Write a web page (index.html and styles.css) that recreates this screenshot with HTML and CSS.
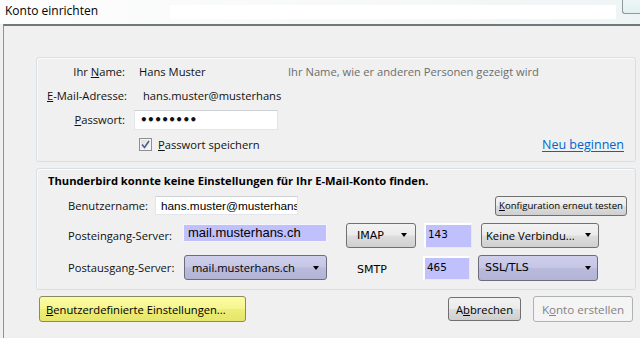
FILE: index.html
```html
<!DOCTYPE html>
<html lang="de">
<head>
    <meta charset="UTF-8">
    <title>Konto einrichten</title>
    <link rel="stylesheet" href="styles.css">
</head>
<body>

<div class="titlebar">
    <span class="title">Konto einrichten</span>
    <span class="titlefield"></span>
    <span class="caption"></span>
</div>

<div class="dialog">
    <!-- Identity -->
    <div class="group identity">
        <span class="lbl">Ihr <u>N</u>ame:</span>
        <span class="val name">Hans Muster</span>
        <span class="hint">Ihr Name, wie er anderen Personen gezeigt wird</span>

        <span class="lbl email-lbl"><u>E</u>-Mail-Adresse:</span>
        <span class="val email">hans.muster@musterhans</span>
        <span></span>

        <span class="lbl"><u>P</u>asswort:</span>
        <span class="textbox password">&bull;&bull;&bull;&bull;&bull;&bull;&bull;&bull;</span>
        <span></span>

        <span></span>
        <span class="val check">
            <span class="checkbox">
                <svg width="9" height="9" viewBox="0 0 9 9"><path d="M1 4.5 L3.5 7.5 L8 1" fill="none" stroke="#4a5d8c" stroke-width="1.6"/></svg>
            </span>
            <span><u>P</u>asswort speichern</span>
        </span>
        <a class="link" href="#">Neu beginnen</a>
    </div>

    <!-- Server settings -->
    <div class="group servers">
        <div class="notice">Thunderbird konnte keine Einstellungen für Ihr E-Mail-Konto finden.</div>

        <div class="row row-user">
            <span class="rlabel user-lbl">Benutzername:</span>
            <span class="textbox username">hans.muster@musterhans</span>
            <button class="btn retest"><u>K</u>onfiguration erneut testen</button>
        </div>

        <div class="row row-in">
            <span class="rlabel in-lbl">Posteingang-Server:</span>
            <span class="textbox host">mail.musterhans.ch</span>
            <span class="menu proto">IMAP<i class="arrow"></i></span>
            <span class="textbox port">143</span>
            <span class="menu sec">Keine Verbindu...<i class="arrow"></i></span>
        </div>

        <div class="row row-out">
            <span class="rlabel out-lbl">Postausgang-Server:</span>
            <span class="menu filled hostmenu">mail.musterhans.ch<i class="arrow"></i></span>
            <span class="smtp">SMTP</span>
            <span class="textbox port port-out">465</span>
            <span class="menu filled sec sec-out">SSL/TLS<i class="arrow"></i></span>
        </div>
    </div>

    <div class="actions">
        <button class="btn custom"><u>B</u>enutzerdefinierte Einstellungen...</button>
        <button class="btn cancel">A<u>b</u>brechen</button>
        <button class="btn create" disabled>K<u>o</u>nto erstellen</button>
    </div>
</div>

</body>
</html>
```

FILE: styles.css
```css
body {
    margin: 0;
    width: 640px;
    height: 338px;
    overflow: hidden;
    background-color: #f0f0f0;
    font-family: "Open Sans", "Liberation Sans", sans-serif;
    font-size: 11.2px;
    color: #111;
}

u {
    text-decoration: underline;
    text-underline-offset: 1px;
}

/* Title bar */
.titlebar {
    height: 24px;
    display: flex;
    align-items: flex-start;
    background: linear-gradient(to right, #fdfdfd, #f6f7f7 70%, #eef4f4);
}

.title {
    width: 165px;
    padding: 2px 0 0 5px;
    font-size: 12px;
    color: #000;
}

.titlefield {
    width: 446px;
    height: 14px;
    margin-top: 5px;
    background-color: #fff;
}

.caption {
    margin-left: auto;
    width: 17px;
    height: 13px;
    background: linear-gradient(#eef7f8, #e2eff1);
    border-left: 1px solid #8c9a9a;
    border-bottom: 1px solid #8c9a9a;
    border-bottom-left-radius: 3px;
}

/* Dialog body */
.dialog {
    margin-left: 3px;
    height: 312px;
    border-top: 2px solid #6f7b7b;
    border-left: 1px solid #8a9494;
}

.group {
    margin: 0 4px 0 32px;
    border: 1px solid #d5dfe5;
    border-radius: 3px;
    box-shadow: inset 1px 1px 0 #fafcfd;
}

/* Identity group */
.identity {
    margin-top: 31px;
    padding: 1px 0 4px;
    display: grid;
    grid-template-columns: 90px 147px 1fr;
    grid-template-rows: 24px 25px 23px 26px;
    column-gap: 7px;
    align-items: center;
}

.lbl {
    text-align: right;
    padding-right: 2px;
}

.email-lbl {
    padding-right: 0;
}

.val.name {
    padding-left: 5px;
}

.val.email {
    padding-left: 9px;
}

.hint {
    color: #6d6d6d;
}

.textbox {
    box-sizing: border-box;
    display: flex;
    align-items: center;
    overflow: hidden;
    white-space: nowrap;
    background-color: #fff;
    border: 1px solid #e2e6ea;
    border-top-color: #cdd1d6;
}

.password {
    width: 144px;
    height: 20px;
    padding-left: 5px;
    font-family: "DejaVu Sans", sans-serif;
    font-size: 12px;
    font-weight: bold;
    letter-spacing: -0.6px;
}

.check {
    display: flex;
    align-items: center;
    gap: 6px;
    padding-left: 5px;
    white-space: nowrap;
}

.checkbox {
    box-sizing: border-box;
    width: 13px;
    height: 13px;
    display: flex;
    align-items: center;
    justify-content: center;
    border: 1px solid #8e8f8f;
    background: linear-gradient(135deg, #dcdcdc, #fbfbfb);
    box-shadow: inset 0 0 0 1px #f4f4f4;
}

.link {
    justify-self: end;
    margin-right: 11px;
    color: #0066cc;
    font-size: 12.5px;
    text-underline-offset: 2px;
}

/* Server group */
.servers {
    margin-top: 6px;
    padding: 1px 0 5px;
}

.notice {
    height: 22px;
    line-height: 22px;
    padding-left: 11px;
    font-weight: bold;
    color: #000;
}

.row {
    display: flex;
    align-items: center;
    padding-left: 31px;
}

.row-user { height: 27px; }
.row-in { height: 32px; }
.row-out { height: 33px; }

.user-lbl { width: 87px; }
.in-lbl { width: 115px; }
.out-lbl { width: 116px; }

.username {
    width: 143px;
    height: 19px;
    padding-left: 5px;
    font-family: "Liberation Sans", sans-serif;
    font-size: 11.8px;
    color: #000;
}

.host {
    width: 144px;
    height: 18px;
    margin-bottom: 5px;
    padding-left: 4px;
    background-color: #c0c0fc;
    border: 1px solid #f4f4fc;
    font-family: "Liberation Sans", sans-serif;
    font-size: 13px;
    color: #000;
}

.port {
    width: 48px;
    height: 25px;
    margin-left: 8px;
    padding: 0 0 3px 2px;
    background-color: #c0c0fc;
    border: 1px solid #e8e8f2;
    border-top: 2px solid #fff;
    border-left: 2px solid #fff;
    font-family: "DejaVu Sans", sans-serif;
    font-size: 10.4px;
    color: #000;
}

.port-out {
    width: 47px;
    height: 24px;
    margin-left: 7px;
}

/* Buttons and menus */
.btn,
.menu {
    box-sizing: border-box;
    border: 1px solid #707070;
    border-radius: 3px;
    background: linear-gradient(#f2f2f2 0%, #ebebeb 48%, #dddddd 52%, #cfcfcf 100%);
    color: #000;
    font-family: inherit;
    font-size: inherit;
    padding: 0;
}

.menu {
    display: flex;
    align-items: center;
    justify-content: space-between;
    height: 25px;
    white-space: nowrap;
}

.arrow {
    width: 0;
    height: 0;
    border-left: 3.5px solid transparent;
    border-right: 3.5px solid transparent;
    border-top: 4px solid #000;
}

.proto {
    width: 70px;
    margin-left: 19px;
    padding: 0 8px 0 10px;
    font-family: "DejaVu Sans", sans-serif;
    font-size: 11px;
}

.sec {
    width: 118px;
    margin-left: 9px;
    padding: 0 7px 0 4px;
}

.filled {
    border-color: #6c6c7e;
    background: linear-gradient(#cfcfec 0%, #c5c5e6 48%, #babadd 52%, #b3b3d6 100%);
}

.hostmenu {
    width: 143px;
    padding: 0 7px;
}

.smtp {
    box-sizing: border-box;
    width: 70px;
    margin: 3px 0 0 19px;
    padding-left: 11px;
    font-family: "DejaVu Sans", sans-serif;
    font-size: 11px;
    color: #000;
}

.sec-out {
    width: 120px;
    height: 26px;
    margin-left: 8px;
    padding: 0 6px;
    font-family: "DejaVu Sans", sans-serif;
    font-size: 11px;
}

.retest {
    width: 132px;
    height: 20px;
    margin: 0 8px 0 auto;
    font-size: 9.6px;
}

/* Bottom buttons */
.actions {
    display: flex;
    align-items: center;
    margin: 6px 7px 0 35px;
}

.custom {
    width: 207px;
    height: 26px;
    padding-left: 6px;
    text-align: left;
    border-color: #8a8a5c;
    background: linear-gradient(#fbfba6 0%, #f6f68e 48%, #eded78 52%, #e6e66c 100%);
}

.cancel {
    width: 73px;
    height: 24px;
    margin-left: auto;
}

.create {
    width: 100px;
    height: 26px;
    margin-left: 12px;
    border-color: #adb2b5;
    background: #f4f4f4;
    color: #838383;
    font-size: 11.6px;
}
```
